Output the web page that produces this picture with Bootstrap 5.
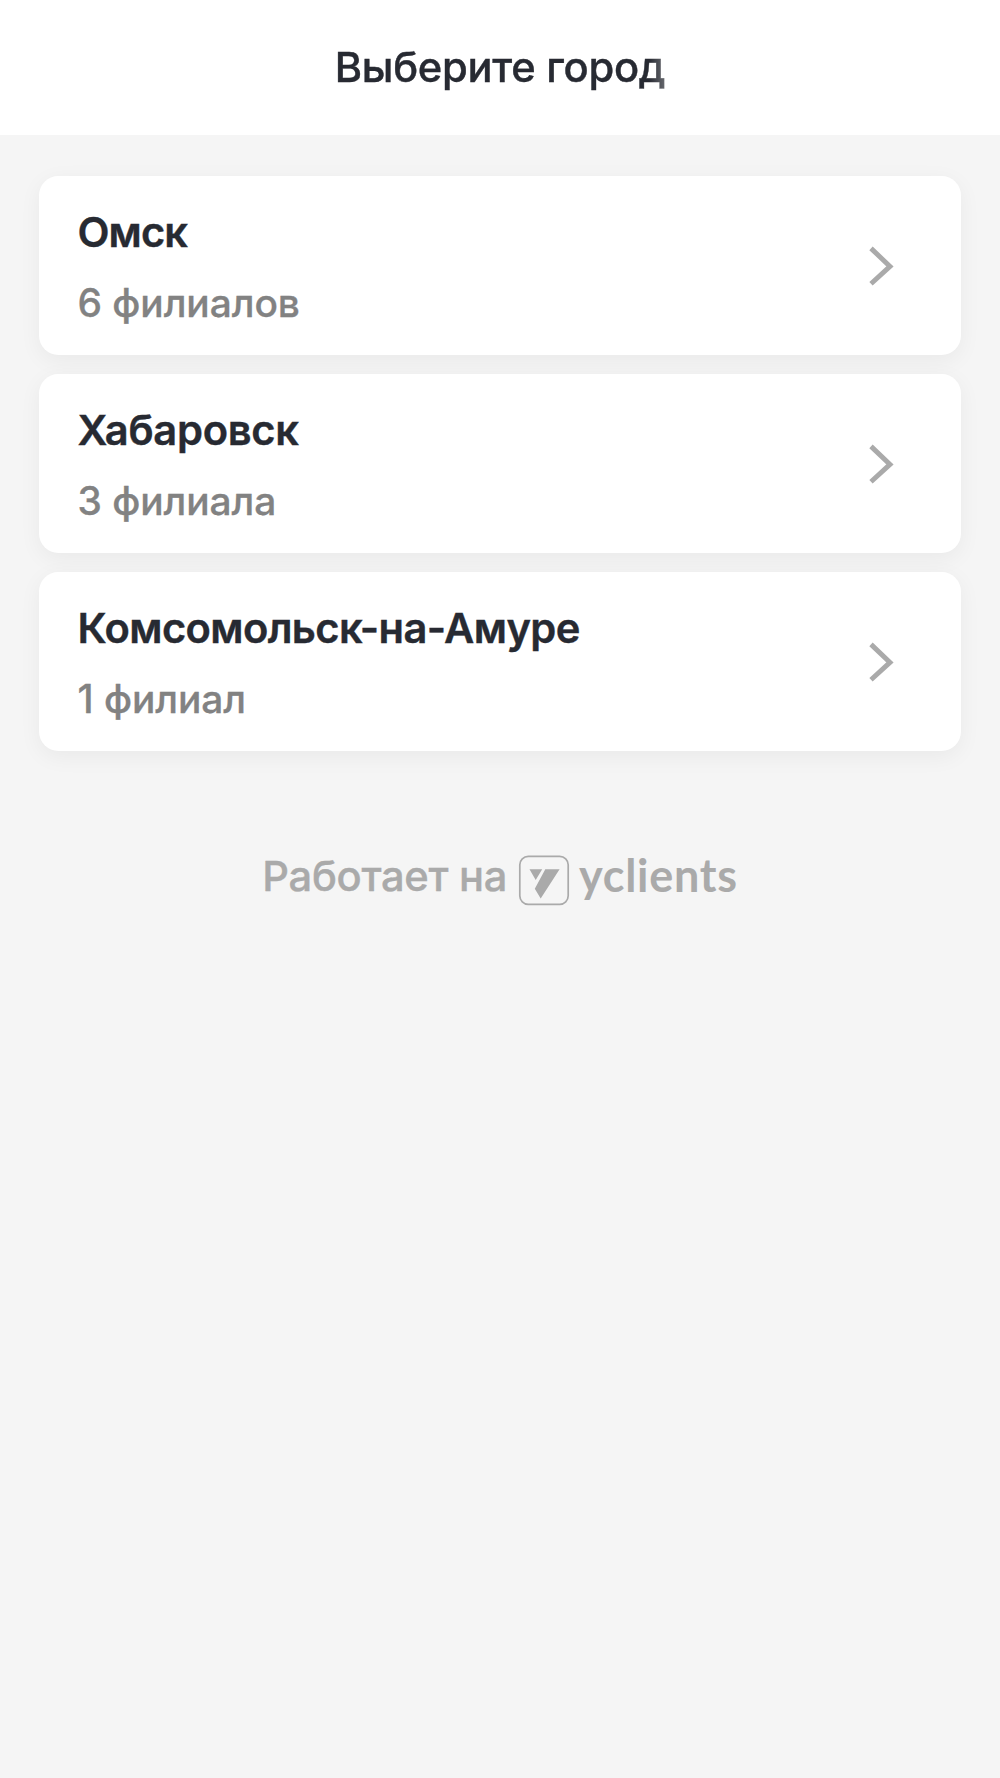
<!DOCTYPE html>
<html lang="ru">
<head>
<meta charset="utf-8">
<meta name="viewport" content="width=device-width, initial-scale=1">
<title>Выберите город</title>
<link href="https://cdn.jsdelivr.net/npm/bootstrap@5.3.0/dist/css/bootstrap.min.css" rel="stylesheet">
<style>
body{background:#f5f5f5;font-family:Inter,"Noto Sans",sans-serif;color:#272a32;min-height:1778px}
.top-bar{height:135px}
.top-title{font-size:41.67px;line-height:50px;font-weight:500;letter-spacing:-.28px;-webkit-text-stroke:.4px;padding-bottom:1px;-webkit-mask-image:linear-gradient(90deg,#000 calc(100% - 16px),rgba(0,0,0,.7));mask-image:linear-gradient(90deg,#000 calc(100% - 16px),rgba(0,0,0,.7))}
.city-list{padding:41px 39px 0;gap:19px}
.city-item{height:179px;border-radius:19.4px;padding:3px 66px 0 38.5px;box-shadow:0 5.5px 22px rgba(0,0,0,.05);color:#272a32}
.city-item svg{margin-bottom:3px}
.city-name{font-size:41.67px;line-height:50px;font-weight:600;letter-spacing:-.62px;-webkit-text-stroke:.4px}
.city-name.short-name{letter-spacing:-.9px}
.city-name.wide-name{letter-spacing:-.3px}
.city-count{font-size:38.9px;line-height:50px;font-weight:500;letter-spacing:-.05px;-webkit-text-stroke:.3px;color:#828282;margin-top:21px}
.powered{margin-top:97px;color:#aaa;height:60px}
.powered-text{font-size:41.67px;line-height:50px;font-weight:500;letter-spacing:-.3px;-webkit-text-stroke:.4px;padding-top:3px}
.powered-mark{margin:0 9px 0 11px}
.brand-name{font-family:Lato,sans-serif;font-weight:700;font-size:45px;line-height:50px;letter-spacing:.7px;padding-top:2px}
</style>
<script src="https://cdn.jsdelivr.net/npm/bootstrap@5.3.0/dist/js/bootstrap.bundle.min.js"></script>
</head>
<body>
<header class="top-bar bg-white d-flex align-items-center justify-content-center">
  <h1 class="top-title m-0">Выберите город</h1>
</header>
<main>
  <div class="city-list d-flex flex-column">
    <a href="#" class="city-item bg-white d-flex align-items-center justify-content-between text-decoration-none">
      <div><div class="city-name short-name">Омск</div><div class="city-count">6 филиалов</div></div>
      <svg width="26" height="40" viewBox="0 0 26 40" fill="none" stroke="#aaa" stroke-width="4.9"><path d="M2 2.4 21 20.4 2 37.8"/></svg>
    </a>
    <a href="#" class="city-item bg-white d-flex align-items-center justify-content-between text-decoration-none">
      <div><div class="city-name wide-name">Хабаровск</div><div class="city-count">3 филиала</div></div>
      <svg width="26" height="40" viewBox="0 0 26 40" fill="none" stroke="#aaa" stroke-width="4.9"><path d="M2 2.4 21 20.4 2 37.8"/></svg>
    </a>
    <a href="#" class="city-item bg-white d-flex align-items-center justify-content-between text-decoration-none">
      <div><div class="city-name">Комсомольск-на-Амуре</div><div class="city-count">1 филиал</div></div>
      <svg width="26" height="40" viewBox="0 0 26 40" fill="none" stroke="#aaa" stroke-width="4.9"><path d="M2 2.4 21 20.4 2 37.8"/></svg>
    </a>
  </div>
  <footer class="powered d-flex justify-content-center align-items-start">
    <span class="powered-text">Работает на</span>
    <svg class="powered-mark" width="52" height="58" viewBox="0 0 52 58"><rect x="1.8" y="8.3" width="48.4" height="48" rx="8.5" fill="none" stroke="#aaa" stroke-width="1.7"/><path fill="#aaa" d="M11.5 21.2H24.2L17.7 31.9ZM27.3 21.2H41.6L22.7 50.5 16.8 40.7Z"/></svg>
    <span class="brand-name">yclients</span>
  </footer>
</main>
</body>
</html>
